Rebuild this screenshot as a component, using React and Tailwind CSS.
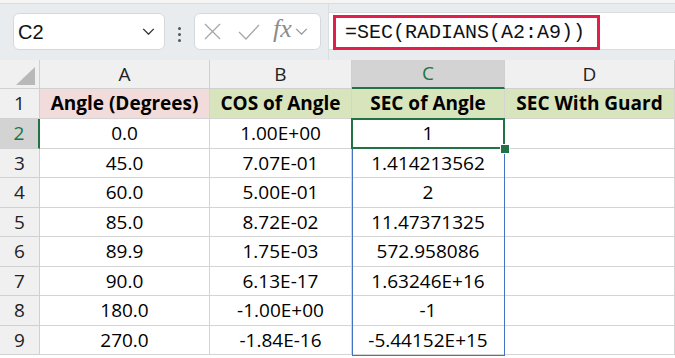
const cols = [
  { key: 'A', w: 'w-[170px]' },
  { key: 'B', w: 'w-[142px]' },
  { key: 'C', w: 'w-[153px]' },
  { key: 'D', w: 'w-[170px]' },
];

const rows = [
  ['0.0', '1.00E+00', '1'],
  ['45.0', '7.07E-01', '1.414213562'],
  ['60.0', '5.00E-01', '2'],
  ['85.0', '8.72E-02', '11.47371325'],
  ['89.9', '1.75E-03', '572.958086'],
  ['90.0', '6.13E-17', '1.63246E+16'],
  ['180.0', '-1.00E+00', '-1'],
  ['270.0', '-1.84E-16', '-5.44152E+15'],
];

const headers = [
  { text: 'Angle (Degrees)', bg: 'bg-[#f2dcdb]' },
  { text: 'COS of Angle', bg: 'bg-[#d8e4bc]' },
  { text: 'SEC of Angle', bg: 'bg-[#d8e4bc]' },
  { text: 'SEC With Guard', bg: 'bg-[#d8e4bc]' },
];

const Chevron = ({ className, stroke = '#333' }) => (
  <svg viewBox="0 0 14 8" className={className} fill="none" stroke={stroke} strokeWidth="1.6">
    <path d="M1 1l6 6 6-6" />
  </svg>
);

const Toolbar = () => (
  <div className="h-[60px] bg-[#e9ecef] relative flex items-start">
    <div className="absolute top-0 left-0 right-0 h-[4px] bg-[#f4f4f4] border-b border-[#dadcde]" />
    {/* NAME BOX */}
    <div className="ml-[13px] mt-[13px] w-[152px] h-[37px] bg-white rounded-[6px] border border-[#d6d9dc] flex items-center justify-between pl-[4px] pr-[9px]">
      <span className="text-[20px] text-[#111] font-['Liberation_Sans',sans-serif]">C2</span>
      <Chevron className="w-[13px] h-[7px]" />
    </div>
    {/* DOTS */}
    <div className="ml-[13px] mt-[27px] flex flex-col gap-[3px]">
      <span className="w-[3px] h-[3px] rounded-full bg-[#555]" />
      <span className="w-[3px] h-[3px] rounded-full bg-[#555]" />
      <span className="w-[3px] h-[3px] rounded-full bg-[#555]" />
    </div>
    {/* FORMULA BUTTONS */}
    <div className="ml-[13px] mt-[13px] w-[127px] h-[37px] bg-white rounded-[6px] border border-[#d6d9dc] flex items-center pl-[9px]">
      <svg viewBox="0 0 18 18" className="w-[17px] h-[17px]" stroke="#a6a6a6" strokeWidth="1.3">
        <path d="M1 1l16 16M17 1L1 17" />
      </svg>
      <svg viewBox="0 0 22 16" className="ml-[17px] w-[22px] h-[16px]" fill="none" stroke="#a6a6a6" strokeWidth="1.3">
        <path d="M1 8l7 7L21 1" />
      </svg>
      <span className="ml-[13px] text-[26px] leading-none italic text-[#8c8c8c] font-['Liberation_Serif',serif] -mt-[5px]">fx</span>
      <Chevron className="ml-[3px] w-[13px] h-[7px]" stroke="#9a9a9a" />
    </div>
    <div className="ml-[7px] w-px h-[60px] bg-[#dcdfe2]" />
    {/* FORMULA BAR */}
    <div className="mt-[12px] flex-1 h-[38px] bg-white border-y border-[#dadcde] pl-[4px] pt-[2px]">
      <div className="w-[267px] h-[35px] border-[3px] border-[#e0204a] flex items-center pl-[9px]">
        <span className="text-[20px] text-[#111] font-['Liberation_Mono',monospace]">=SEC(RADIANS(A2:A9))</span>
      </div>
    </div>
  </div>
);

const App = () => {
  return (
    <div className="w-[675px] h-[358px] overflow-hidden bg-white font-['Open_Sans',sans-serif] text-[19px] text-black">
      <Toolbar />

      <div className="relative">
        {/* COLUMN HEADERS */}
        <div className="flex h-[29px] bg-[#f0f0f0]">
          <div className="w-[40px] border-r border-b border-[#d0d0d0] relative">
            <svg viewBox="0 0 20 19" className="absolute left-[16px] top-[7px] w-[19px] h-[18px]">
              <polygon points="20,0 20,19 0,19" fill="#b8b8b8" />
            </svg>
          </div>
          {cols.map((c) =>
            c.key === 'C' ? (
              <div key={c.key} className={`${c.w} bg-[#d3d3d3] border-r border-[#d0d0d0] border-b-2 border-b-[#217346] flex items-center justify-center text-[#217346]`}>
                {c.key}
              </div>
            ) : (
              <div key={c.key} className={`${c.w} border-r border-b border-[#d0d0d0] flex items-center justify-center text-[#222]`}>
                {c.key}
              </div>
            )
          )}
        </div>

        {/* ROW 1 */}
        <div className="flex h-[30px]">
          <div className="w-[40px] bg-[#f0f0f0] border-r border-b border-[#d0d0d0] flex items-center justify-center text-[#222]">1</div>
          {headers.map((h, i) => (
            <div key={i} className={`${cols[i].w} ${h.bg} border-r border-b border-[#d4d4d4] flex items-center justify-center font-bold`}>
              {h.text}
            </div>
          ))}
        </div>

        {/* DATA ROWS */}
        {rows.map((r, i) => (
          <div key={i} className="flex h-[29.5px]">
            {i === 0 ? (
              <div className="w-[40px] bg-[#d3d3d3] border-r-2 border-r-[#217346] border-b border-b-[#d0d0d0] flex items-center justify-center text-[#217346]">
                {i + 2}
              </div>
            ) : (
              <div className="w-[40px] bg-[#f0f0f0] border-r border-b border-[#d0d0d0] flex items-center justify-center text-[#222]">
                {i + 2}
              </div>
            )}
            <div className="w-[170px] border-r border-b border-[#d4d4d4] flex items-center justify-center">{r[0]}</div>
            <div className="w-[142px] border-r border-b border-[#d4d4d4] flex items-center justify-center">{r[1]}</div>
            <div className="w-[153px] border-r border-b border-[#d4d4d4] flex items-center justify-center">{r[2]}</div>
            <div className="w-[170px] border-r border-b border-[#d4d4d4]" />
          </div>
        ))}

        {/* SPILL RANGE */}
        <div className="absolute left-[352px] top-[59px] w-[153px] h-[237px] border-[1.5px] border-[#4472c4]" />
        {/* ACTIVE CELL */}
        <div className="absolute left-[351px] top-[58px] w-[154px] h-[31px] border-2 border-[#217346]" />
        <div className="absolute left-[500px] top-[84px] w-[10px] h-[10px] bg-[#217346] border border-white" />
      </div>
    </div>
  );
};

export default App;
